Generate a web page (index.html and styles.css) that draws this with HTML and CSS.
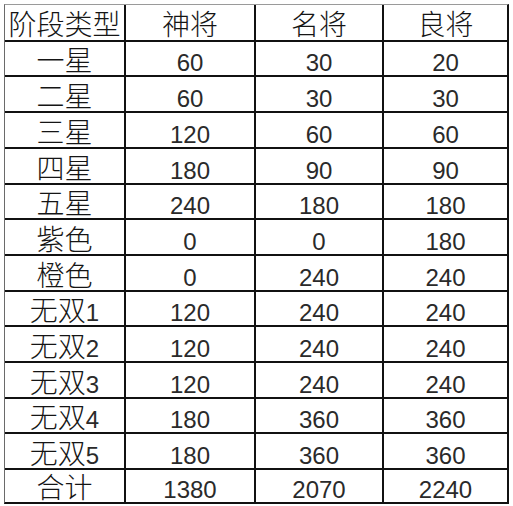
FILE: index.html
```html
<!DOCTYPE html>
<html lang="zh-CN">
<head>
<meta charset="utf-8">
<title>阶段类型</title>
<link rel="stylesheet" href="styles.css">
</head>
<body>
<div class="sheet">
  <div class="c h"><span class="t"><span class="z">阶段类型</span></span></div>
  <div class="c h"><span class="t"><span class="z">神将</span></span></div>
  <div class="c h"><span class="t"><span class="z">名将</span></span></div>
  <div class="c h"><span class="t"><span class="z">良将</span></span></div>

  <div class="c"><span class="t"><span class="z">一星</span></span></div><div class="c"><span class="t">60</span></div><div class="c"><span class="t">30</span></div><div class="c"><span class="t">20</span></div>
  <div class="c"><span class="t"><span class="z">二星</span></span></div><div class="c"><span class="t">60</span></div><div class="c"><span class="t">30</span></div><div class="c"><span class="t">30</span></div>
  <div class="c"><span class="t"><span class="z">三星</span></span></div><div class="c"><span class="t">120</span></div><div class="c"><span class="t">60</span></div><div class="c"><span class="t">60</span></div>
  <div class="c"><span class="t"><span class="z">四星</span></span></div><div class="c"><span class="t">180</span></div><div class="c"><span class="t">90</span></div><div class="c"><span class="t">90</span></div>
  <div class="c"><span class="t"><span class="z">五星</span></span></div><div class="c"><span class="t">240</span></div><div class="c"><span class="t">180</span></div><div class="c"><span class="t">180</span></div>
  <div class="c"><span class="t"><span class="z">紫色</span></span></div><div class="c"><span class="t">0</span></div><div class="c"><span class="t">0</span></div><div class="c"><span class="t">180</span></div>
  <div class="c"><span class="t"><span class="z">橙色</span></span></div><div class="c"><span class="t">0</span></div><div class="c"><span class="t">240</span></div><div class="c"><span class="t">240</span></div>
  <div class="c"><span class="t"><span class="z">无双</span>1</span></div><div class="c"><span class="t">120</span></div><div class="c"><span class="t">240</span></div><div class="c"><span class="t">240</span></div>
  <div class="c"><span class="t"><span class="z">无双</span>2</span></div><div class="c"><span class="t">120</span></div><div class="c"><span class="t">240</span></div><div class="c"><span class="t">240</span></div>
  <div class="c"><span class="t"><span class="z">无双</span>3</span></div><div class="c"><span class="t">120</span></div><div class="c"><span class="t">240</span></div><div class="c"><span class="t">240</span></div>
  <div class="c"><span class="t"><span class="z">无双</span>4</span></div><div class="c"><span class="t">180</span></div><div class="c"><span class="t">360</span></div><div class="c"><span class="t">360</span></div>
  <div class="c"><span class="t"><span class="z">无双</span>5</span></div><div class="c"><span class="t">180</span></div><div class="c"><span class="t">360</span></div><div class="c"><span class="t">360</span></div>
  <div class="c"><span class="t"><span class="z">合计</span></span></div><div class="c"><span class="t">1380</span></div><div class="c"><span class="t">2070</span></div><div class="c"><span class="t">2240</span></div>
</div>
</body>
</html>
```

FILE: styles.css
```css
html, body {
  margin: 0;
  padding: 0;
  background: #ffffff;
}

.sheet {
  margin: 4px 0 0 4px;
  width: 505px;
  box-sizing: border-box;
  display: grid;
  grid-template-columns: 119px 128px 126px 123px;
  grid-template-rows: 35px 33px 34px 34px 34px 33px 34px 34px 33px 34px 34px 33px 34px 32px;
  gap: 2px;
  background: #111111;
  border-top: 1px solid #9a9a9a;
  border-left: 1px solid #6a6a6a;
  border-right: 2px solid #111111;
  border-bottom: 2px solid #111111;
}

.c {
  background: #ffffff;
  display: flex;
  align-items: flex-end;
  justify-content: center;
  padding-bottom: 0;
  box-sizing: border-box;
  font-family: "Liberation Sans", Arial, sans-serif;
  font-size: 24px;
  line-height: 24px;
  color: #2a2a2a;
  white-space: nowrap;
}

.c.h {
  padding-bottom: 1px;
}

.t {
  display: block;
  line-height: 24px;
}

.z {
  font-family: "Noto Sans CJK SC", "Noto Sans CJK JP", sans-serif;
  font-weight: 300;
  font-size: 28px;
  line-height: 0;
  color: #151515;
}
```
